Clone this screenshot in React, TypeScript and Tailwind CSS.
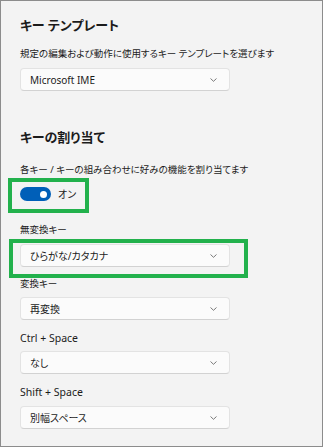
import React from 'react';

const jp = "font-['Noto_Sans','Noto_Sans_CJK_JP',sans-serif] [font-feature-settings:'palt']";

const Chevron = () => (
  <svg width="7" height="4" viewBox="0 0 7 4" className="mr-[12px]">
    <path d="M0.5 0.5 L3.5 3.3 L6.5 0.5" fill="none" stroke="#6b6b6b" strokeWidth="0.9" />
  </svg>
);

const Dropdown = ({ value, small }: { value: string; small?: boolean }) => (
  <div className="flex h-[23px] w-[210px] items-center justify-between rounded-[4px] border border-[#e3e3e3] border-b-[#d2d2d2] bg-[#fbfbfb] pl-[9px]">
    <span className={`${small ? 'text-[10px]' : 'text-[10.5px]'} leading-none text-[#1b1b1b]`}>{value}</span>
    <Chevron />
  </div>
);

const Label = ({ text, small }: { text: string; small?: boolean }) => (
  <div className={`flex h-[14px] items-center ${small ? 'text-[9.5px]' : 'text-[10.5px]'} leading-none text-[#1b1b1b]`}>
    {text}
  </div>
);

export default function App() {
  return (
    <div className={`relative h-[447px] w-[323px] overflow-hidden border border-[#8c8c8c] bg-[#f3f3f3] ${jp}`}>
      <div className="flex flex-col pl-[19px]">
        <div className="mt-[15px] flex h-[18px] items-center text-[13px] font-semibold leading-none text-[#1b1b1b]">
          キー テンプレート
        </div>
        <div className="mt-[13px]">
          <Label small text="規定の編集および動作に使用するキー テンプレートを選びます" />
        </div>
        <div className="mt-[7px]">
          <Dropdown small value="Microsoft IME" />
        </div>

        <div className="mt-[37px] flex h-[18px] items-center text-[13px] font-semibold leading-none text-[#1b1b1b]">
          キーの割り当て
        </div>
        <div className="mt-[17px]">
          <Label small text="各キー / キーの組み合わせに好みの機能を割り当てます" />
        </div>
        <div className="mt-[10px] flex h-[14px] items-center gap-[7px]">
          <div className="flex h-[14px] w-[31px] items-center justify-end rounded-full bg-[#005fb8] pr-[4px]">
            <div className="h-[7px] w-[7px] rounded-full bg-white" />
          </div>
          <span className="text-[10px] leading-none text-[#1b1b1b]">オン</span>
        </div>

        <div className="mt-[22px]">
          <Label small text="無変換キー" />
        </div>
        <div className="mt-[7px]">
          <Dropdown small value="ひらがな/カタカナ" />
        </div>

        <div className="mt-[10px]">
          <Label small text="変換キー" />
        </div>
        <div className="mt-[6px]">
          <Dropdown small value="再変換" />
        </div>

        <div className="mt-[11px]">
          <Label text="Ctrl + Space" />
        </div>
        <div className="mt-[6px]">
          <Dropdown small value="なし" />
        </div>

        <div className="mt-[11px]">
          <Label text="Shift + Space" />
        </div>
        <div className="mt-[7px]">
          <Dropdown small value="別幅スペース" />
        </div>
      </div>

      <div className="absolute left-[7px] top-[177px] h-[35px] w-[81px] border-[4px] border-[#22b14c]" />
      <div className="absolute left-[8px] top-[238px] h-[39px] w-[239px] border-[4px] border-[#22b14c]" />
    </div>
  );
}
